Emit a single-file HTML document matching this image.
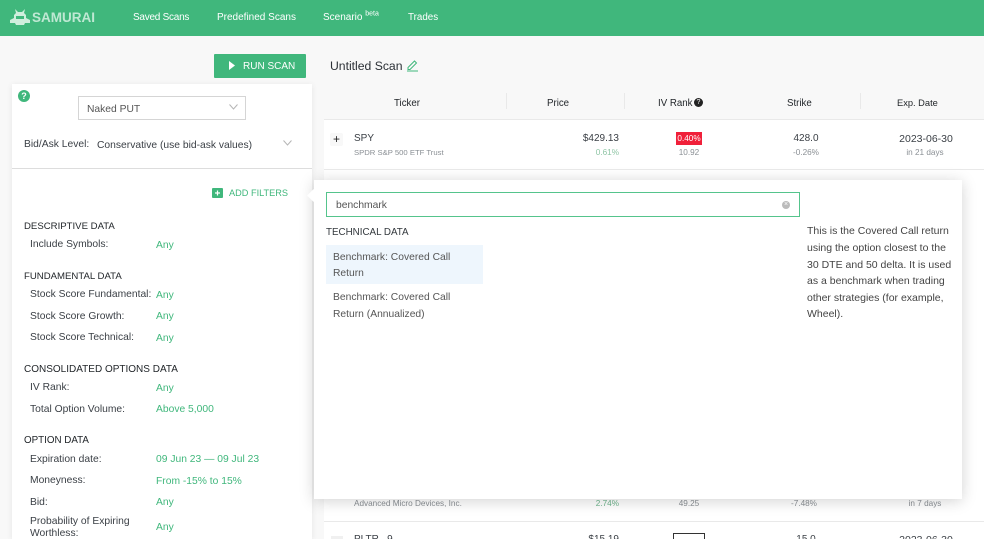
<!DOCTYPE html>
<html><head><meta charset="utf-8"><style>
html,body{margin:0;padding:0;width:984px;height:539px;overflow:hidden}
#w{width:984px;height:539px;overflow:hidden;position:relative;background:#f8f8f8;font-family:"Liberation Sans",sans-serif;font-size:10.3px;color:#3a3f45}
.a{position:absolute;white-space:nowrap;line-height:14px;margin-top:2px}
svg.a{margin-top:0}
.g{color:#40b77c}
.s{font-size:8.2px;color:#8a8f94}
.h{color:#22262a;font-size:9.7px}
.n{color:#fff;font-size:10px}
.t{color:#22262a;font-size:9.8px}
.v{font-size:10px}
.r{text-align:right}
.c{text-align:center}
.line{position:absolute;background:#e9e9e9}
</style></head><body><div id="w">
<div style="position:absolute;left:0;top:0;width:984px;height:36px;background:#40b77c"></div>
<svg class="a" style="left:9px;top:8px" width="22" height="18" viewBox="0 0 22 18"><path d="M6 1l3 3h4l3-3-1 4 2 2v3l4 2v3h-5l-1 2H7l-1-2H1v-3l4-2V7l2-2z" fill="#cfeedd"/><path d="M7 8h8v3H7z" fill="#40b77c"/></svg>
<div class="a" style="left:32px;top:8px;font-size:13.5px;font-weight:700;color:#bfe8d3;line-height:16px">SAMURAI</div>
<div class="a n" style="left:133px;top:9px;letter-spacing:-.25px">Saved Scans</div>
<div class="a n" style="left:217px;top:9px">Predefined Scans</div>
<div class="a n" style="left:323px;top:9px">Scenario <sup style="font-size:7px;line-height:0">beta</sup></div>
<div class="a n" style="left:408px;top:9px;font-size:9.8px">Trades</div>

<div style="position:absolute;left:214px;top:54px;width:92px;height:24px;background:#40b77c;border-radius:1px"></div>
<svg class="a" style="left:229px;top:61px" width="7" height="9"><path d="M0 0l6 4.500L0 9z" fill="#fff"/></svg>
<div class="a n" style="left:243px;top:58px">RUN SCAN</div>
<div class="a" style="left:330px;top:56px;font-size:12.2px;color:#2b3036;line-height:16px">Untitled Scan</div>
<svg class="a" style="left:406px;top:59px" width="13" height="13" viewBox="0 0 13 13"><path d="M2 8.500L8.500 2l2 2L4 10.500H2zM1 12h11" fill="none" stroke="#40b77c" stroke-width="1"/></svg>

<!-- table -->
<div style="position:absolute;left:324px;top:120px;width:660px;height:419px;background:#fff"></div>
<div class="line" style="left:324px;top:119px;width:660px;height:1px"></div>
<div class="line" style="left:506px;top:93px;width:1px;height:16px"></div>
<div class="line" style="left:624px;top:93px;width:1px;height:16px"></div>
<div class="line" style="left:860px;top:93px;width:1px;height:16px"></div>
<div class="a h" style="left:394px;top:95px">Ticker</div>
<div class="a h" style="left:547px;top:95px">Price</div>
<div class="a h" style="left:658px;top:95px">IV Rank</div>
<div style="position:absolute;left:694px;top:98px;width:9px;height:9px;border-radius:50%;background:#222;color:#fff;font-size:7px;line-height:9px;text-align:center">?</div>
<div class="a h" style="left:787px;top:95px">Strike</div>
<div class="a h" style="left:897px;top:94px;font-size:9.3px">Exp. Date</div>

<div style="position:absolute;left:330px;top:133px;width:13px;height:13px;background:#f8f8f8;border-radius:2px;color:#222;font-size:12px;line-height:13px;text-align:center">+</div>
<div class="a v" style="left:354px;top:130px">SPY</div>
<div class="a s" style="left:354px;top:144px;font-size:7.7px">SPDR S&amp;P 500 ETF Trust</div>
<div class="a r v" style="left:539px;top:130px;width:80px">$429.13</div>
<div class="a s r" style="left:539px;top:144px;width:80px;color:#8fc5a5">0.61%</div>
<div class="a c" style="left:676px;top:130px;width:26px;height:13px;line-height:13px;background:#f0203a;color:#fff;font-size:8.2px">0.40%</div>
<div class="a s c" style="left:669px;top:144px;width:40px">10.92</div>
<div class="a c v" style="left:786px;top:130px;width:40px">428.0</div>
<div class="a s c" style="left:786px;top:144px;width:40px">-0.26%</div>
<div class="a c" style="left:888px;top:130px;width:76px;font-size:10.5px">2023-06-30</div>
<div class="a s c" style="left:887px;top:144px;width:76px">in 21 days</div>
<div class="line" style="left:324px;top:169px;width:660px;height:1px"></div>
<div class="line" style="left:324px;top:521px;width:660px;height:1px"></div>
<div class="a s" style="left:354px;top:495px">Advanced Micro Devices, Inc.</div>
<div class="a s r" style="left:539px;top:495px;width:80px;color:#6fb58d">2.74%</div>
<div class="a s c" style="left:669px;top:495px;width:40px">49.25</div>
<div class="a s c" style="left:784px;top:495px;width:40px">-7.48%</div>
<div class="a s c" style="left:887px;top:495px;width:76px">in 7 days</div>
<div style="position:absolute;left:331px;top:536px;width:12px;height:12px;background:#f0f0f0"></div>
<div class="a v" style="left:354px;top:531px">PLTR &nbsp; 9</div>
<div class="a r v" style="left:539px;top:531px;width:80px">$15.19</div>
<div style="position:absolute;left:673px;top:533px;width:30px;height:12px;border:1px solid #333"></div>
<div class="a c v" style="left:786px;top:531px;width:40px">15.0</div>
<div class="a c" style="left:888px;top:531px;width:76px;font-size:10.5px">2023-06-30</div>

<!-- left panel -->
<div style="position:absolute;left:12px;top:84px;width:300px;height:455px;background:#fff;box-shadow:0 1px 6px rgba(0,0,0,.08)"></div>
<div style="position:absolute;left:18px;top:90px;width:12px;height:12px;border-radius:50%;background:#40b77c;color:#fff;font-size:9px;line-height:12px;text-align:center;font-weight:700">?</div>
<div style="position:absolute;left:78px;top:96px;width:166px;height:22px;border:1px solid #d5d5d5"></div>
<div class="a" style="left:87px;top:101px;color:#555">Naked PUT</div>
<svg class="a" style="left:229px;top:104px" width="9" height="6"><path d="M.5 .5L4.500 5 8.500 .5" fill="none" stroke="#b5b5b5"/></svg>
<div class="a" style="left:24px;top:136px">Bid/Ask Level:</div>
<div class="a" style="left:97px;top:137px">Conservative (use bid-ask values)</div>
<svg class="a" style="left:283px;top:140px" width="9" height="6"><path d="M.5 .5L4.500 5 8.500 .5" fill="none" stroke="#b5b5b5"/></svg>
<div class="line" style="left:12px;top:168px;width:300px;height:1px;background:#ddd"></div>
<svg class="a" style="left:212px;top:188px" width="11" height="10" viewBox="0 0 11 10"><rect width="11" height="10" rx="1" fill="#40b77c"/><path d="M5.500 2.500v5M3 5h5" stroke="#fff" stroke-width="1.200"/></svg>
<div class="a g" style="left:229px;top:184px;font-size:9.2px">ADD FILTERS</div>

<div class="a t" style="left:24px;top:218px;font-size:9.6px">DESCRIPTIVE DATA</div>
<div class="a" style="left:30px;top:236px">Include Symbols:</div><div class="a g" style="left:156px;top:237px">Any</div>
<div class="a t" style="left:24px;top:268px;font-size:9.6px">FUNDAMENTAL DATA</div>
<div class="a" style="left:30px;top:286px">Stock Score Fundamental:</div><div class="a g" style="left:156px;top:287px">Any</div>
<div class="a" style="left:30px;top:308px">Stock Score Growth:</div><div class="a g" style="left:156px;top:308px">Any</div>
<div class="a" style="left:30px;top:329px">Stock Score Technical:</div><div class="a g" style="left:156px;top:330px">Any</div>
<div class="a t" style="left:24px;top:361px;font-size:10px">CONSOLIDATED OPTIONS DATA</div>
<div class="a" style="left:30px;top:379px">IV Rank:</div><div class="a g" style="left:156px;top:380px">Any</div>
<div class="a" style="left:30px;top:401px">Total Option Volume:</div><div class="a g" style="left:156px;top:401px">Above 5,000</div>
<div class="a t" style="left:24px;top:432px">OPTION DATA</div>
<div class="a" style="left:30px;top:451px">Expiration date:</div><div class="a g" style="left:156px;top:451px">09 Jun 23 — 09 Jul 23</div>
<div class="a" style="left:30px;top:472px">Moneyness:</div><div class="a g" style="left:156px;top:473px">From -15% to 15%</div>
<div class="a" style="left:30px;top:494px">Bid:</div><div class="a g" style="left:156px;top:494px">Any</div>
<div class="a" style="left:30px;top:513px">Probability of Expiring</div>
<div class="a" style="left:30px;top:525px">Worthless:</div><div class="a g" style="left:156px;top:519px">Any</div>

<!-- popup -->
<div style="position:absolute;left:314px;top:180px;width:648px;height:319px;background:#fff;box-shadow:0 2px 14px rgba(0,0,0,.18)"></div>
<div style="position:absolute;left:309px;top:191px;width:9px;height:9px;background:#fff;transform:rotate(45deg)"></div>
<div style="position:absolute;left:326px;top:192px;width:472px;height:23px;border:1px solid #55c48c"></div>
<div class="a" style="left:336px;top:197px;color:#555">benchmark</div>
<div style="position:absolute;left:782px;top:201px;width:8px;height:8px;border-radius:50%;background:#bbb;color:#fff;font-size:7px;line-height:8px;text-align:center">×</div>
<div class="a t" style="left:326px;top:224px;color:#33383d">TECHNICAL DATA</div>
<div style="position:absolute;left:326px;top:245px;width:157px;height:39px;background:#eef6fd"></div>
<div class="a" style="left:333px;top:249px;color:#555">Benchmark: Covered Call</div>
<div class="a" style="left:333px;top:265px;color:#555">Return</div>
<div class="a" style="left:333px;top:289px;color:#555">Benchmark: Covered Call</div>
<div class="a" style="left:333px;top:306px;color:#555">Return (Annualized)</div>
<div class="a" style="left:807px;top:222px;color:#444;font-size:10.5px">This is the Covered Call return</div>
<div class="a" style="left:807px;top:239px;color:#444;font-size:10.5px">using the option closest to the</div>
<div class="a" style="left:807px;top:256px;color:#444;font-size:10.5px">30 DTE and 50 delta. It is used</div>
<div class="a" style="left:807px;top:272px;color:#444;font-size:10.5px">as a benchmark when trading</div>
<div class="a" style="left:807px;top:289px;color:#444;font-size:10.5px">other strategies (for example,</div>
<div class="a" style="left:807px;top:305px;color:#444;font-size:10.5px">Wheel).</div>
</div></body></html>
